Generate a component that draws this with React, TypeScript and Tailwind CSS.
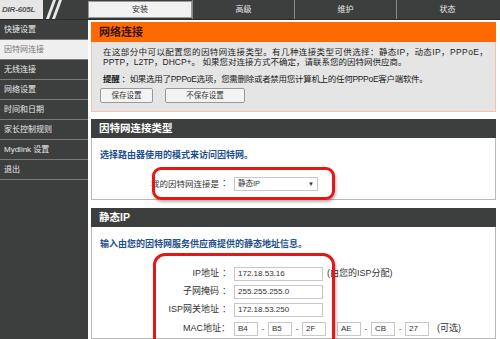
const FONT = "font-['Liberation_Sans','Noto_Sans_CJK_SC',sans-serif]"

const sideItems = ['快捷设置', '因特网连接', '无线连接', '网络设置', '时间和日期', '家长控制规则', 'Mydlink 设置', '退出']
const tabs = ['安装', '高级', '维护', '状态']

function Logo() {
  return (
    <div className="flex h-full w-[88px]">
      <div className="flex w-[43px] items-center bg-[#e6e6e6] pl-[2px]">
        <span className="text-[8px] font-bold italic text-[#555] tracking-tight">DIR-605L</span>
      </div>
      <svg width="45" height="19" viewBox="0 0 45 19">
        <polygon points="3,19 6,19 13,0 10,0" fill="#e8e8e8" />
        <polygon points="9,19 12,19 19,0 16,0" fill="#e8e8e8" />
      </svg>
    </div>
  )
}

function Field({ label, value, note }: { label: string; value: string; note?: string }) {
  return (
    <div className="flex h-[17px] items-center">
      <span className="w-[127px] text-right text-[9px] text-[#333]">{label}</span>
      <span className="w-[15px] text-center text-[9px] text-[#333]">：</span>
      <div className="flex h-[14px] w-[89px] items-center border border-[#c8c8c8] bg-white pl-[3px] text-[8px] text-[#333]">
        {value}
      </div>
      {note && <span className="ml-[4px] text-[9px] text-[#333]">{note}</span>}
    </div>
  )
}

function MacBox({ v }: { v: string }) {
  return (
    <div className="flex h-[14px] w-[24px] items-center border border-[#c8c8c8] bg-white pl-[3px] text-[8px] text-[#333]">
      {v}
    </div>
  )
}

function Dash() {
  return <span className="w-[10px] text-center text-[8px] text-[#333]">-</span>
}

export default function App() {
  return (
    <div className={`relative h-[339px] w-[500px] overflow-hidden bg-white ${FONT}`}>
      {/* top bar */}
      <div className="flex h-[20px] border-b border-[#2a2a2a] bg-[#3d3f3f]">
        <Logo />
        <div className="flex flex-1">
          {tabs.map((t, i) => (
            <div
              key={t}
              className={
                i === 0
                  ? 'my-[1px] flex w-[104px] items-center justify-center border border-[#999] bg-[#f2f2f2] text-[8px] text-[#333]'
                  : 'flex w-[102px] items-center justify-center border-l border-[#8a8a8a] text-[8px] text-[#e6e6e6]'
              }
            >
              {t}
            </div>
          ))}
        </div>
      </div>

      <div className="flex">
        {/* sidebar */}
        <div className="h-[319px] w-[88px] bg-[#3d3f3f]">
          {sideItems.map((s, i) => (
            <div
              key={s}
              className={
                i === 1
                  ? 'flex h-[20px] items-center border-b border-[#7a7a7a] bg-[#efefef] pl-[4px] text-[8px] text-[#777]'
                  : 'flex h-[20px] items-center border-b border-[#7a7a7a] pl-[4px] text-[8px] text-[#e8e8e8]'
              }
            >
              {s}
            </div>
          ))}
        </div>

        {/* main */}
        <div className="flex flex-1 flex-col pl-[3px] pr-[4px] pt-[2px]">
          {/* 网络连接 */}
          <div className="flex h-[20px] items-center bg-[#ff6a00] pl-[8px] text-[11px] font-bold text-[#3a1500]">
            网络连接
          </div>
          <div className="h-[70px] border border-t-0 border-[#f2c7a6] bg-[#e5e5e5] pl-[11px] pt-[5px]">
            <p className="text-[8.5px] leading-[10px] tracking-[0.4px] text-[#222]">
              在这部分中可以配置您的因特网连接类型。有几种连接类型可供选择：静态IP，动态IP，PPPoE，
            </p>
            <p className="text-[8.5px] leading-[10px] text-[#222]">
              PPTP，L2TP，DHCP+。 如果您对连接方式不确定，请联系您的因特网供应商。
            </p>
            <p className="mt-[7px] text-[8.5px] leading-[10px] tracking-[-0.3px] text-[#222]">
              <span className="font-bold">提醒</span> ：如果选用了PPPoE选项，您需删除或者禁用您计算机上的任何PPPoE客户端软件。
            </p>
            <div className="ml-[-3px] mt-[4px] flex gap-[12px]">
              <button className="flex h-[15px] w-[53px] items-center justify-center rounded-[2px] border border-[#999] bg-[#f3f3f3] text-[7.5px] text-[#333]">
                保存设置
              </button>
              <button className="flex h-[15px] w-[80px] items-center justify-center rounded-[2px] border border-[#999] bg-[#f3f3f3] text-[7.5px] text-[#333]">
                不保存设置
              </button>
            </div>
          </div>

          {/* 因特网连接类型 */}
          <div className="mt-[7px] flex h-[19px] items-center bg-[#3d3f3f] pl-[8px] text-[10.5px] font-bold text-white">
            因特网连接类型
          </div>
          <div className="h-[62px] border border-t-0 border-[#b8b8b8] bg-white pt-[12px]">
            <p className="pl-[8px] text-[9px] font-bold leading-[10px] text-[#1d4f8f]">
              选择路由器使用的模式来访问因特网。
            </p>
            <div className="mt-[17px] flex items-center">
              <span className="w-[127px] text-right text-[8.5px] text-[#333]">我的因特网连接是</span>
              <span className="w-[15px] text-center text-[9px] text-[#333]">：</span>
              <div className="flex h-[14px] w-[84px] items-center justify-between border border-[#c8c8c8] bg-white px-[3px] text-[7.5px] text-[#333]">
                <span>静态IP</span>
                <span className="text-[6px]">▼</span>
              </div>
            </div>
          </div>

          {/* 静态IP */}
          <div className="mt-[8px] flex h-[19px] items-center bg-[#3d3f3f] pl-[8px] text-[10.5px] font-bold text-white">
            静态IP
          </div>
          <div className="flex-1 border border-t-0 border-[#b8b8b8] bg-white pt-[12px]">
            <p className="pl-[8px] text-[9px] font-bold leading-[10px] text-[#1d4f8f]">
              输入由您的因特网服务供应商提供的静态地址信息。
            </p>
            <div className="mt-[16px] flex flex-col gap-[1px]">
              <Field label="IP地址" value="172.18.53.16" note="(由您的ISP分配)" />
              <Field label="子网掩码" value="255.255.255.0" />
              <Field label="ISP网关地址" value="172.18.53.250" />
              <div className="mt-[1px] flex h-[17px] items-center">
                <span className="w-[138px] text-right text-[9px] text-[#333]">MAC地址：</span>
                <span className="w-[4px]" />
                <MacBox v="B4" />
                <Dash />
                <MacBox v="B5" />
                <Dash />
                <MacBox v="2F" />
                <span className="w-[11px]" />
                <MacBox v="AE" />
                <Dash />
                <MacBox v="CB" />
                <Dash />
                <MacBox v="27" />
                <span className="ml-[8px] text-[9px] text-[#333]">(可选)</span>
              </div>
            </div>
          </div>
        </div>
      </div>

      {/* red annotation outlines */}
      <div className="absolute left-[152px] top-[167px] h-[33px] w-[183px] rounded-[9px] border-[3px] border-[#e01818] shadow-[1px_2px_3px_rgba(0,0,0,0.3)]" />
      <div className="absolute left-[153px] top-[253px] h-[110px] w-[182px] rounded-[12px] border-[3px] border-[#e01818] shadow-[1px_2px_3px_rgba(0,0,0,0.3)]" />
    </div>
  )
}
